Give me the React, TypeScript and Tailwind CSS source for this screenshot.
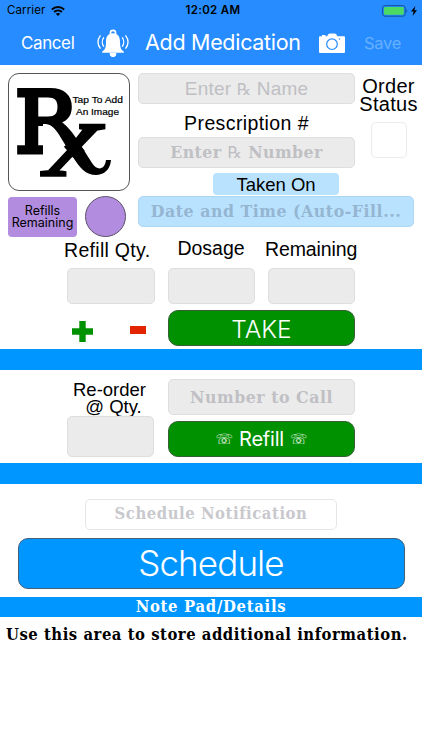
import { ReactNode } from "react";
import clsx from "clsx";

interface FieldProps {
  placeholder?: ReactNode;
  className?: string;
}

function Field({ placeholder, className }: FieldProps) {
  return (
    <div
      className={clsx(
        "flex items-center justify-center rounded-[5px] border whitespace-nowrap",
        className
      )}
    >
      {placeholder}
    </div>
  );
}

function Divider() {
  return <div className="h-[21px] shrink-0 bg-[#0096ff]" />;
}

function StatusBar() {
  return (
    <div className="grid h-[22px] grid-cols-3 items-center pl-[7px] pr-[5px] text-black">
      <div className="flex items-center gap-[6px] text-[11.5px] tracking-[0.1px]">
        Carrier
        <svg width="14" height="10" viewBox="0 0 14 10" fill="none" stroke="black" strokeWidth="2">
          <path d="M0.8 3.6C4.3.2 9.7.2 13.2 3.6" />
          <path d="M3.1 6C5.3 3.9 8.7 3.9 10.9 6" />
          <path d="M7 10L4.8 7.8C6 6.7 8 6.7 9.2 7.8Z" fill="black" stroke="none" />
        </svg>
      </div>
      <div className="pl-[2px] text-center text-[11.5px] font-semibold tracking-[0.35px]">12:02 AM</div>
      <div className="flex items-center justify-end gap-[3px]">
        <svg width="26" height="12" viewBox="0 0 26 12">
          <rect x="0.6" y="0.6" width="22.6" height="10.6" rx="2.4" fill="none" stroke="#14539c" />
          <rect x="2" y="2" width="19.8" height="7.8" rx="1" fill="#4cd964" />
          <path d="M24.4 4.2C25.6 4.7 25.6 7.1 24.4 7.6Z" fill="#14539c" />
        </svg>
        <svg width="6" height="10" viewBox="0 0 6 10">
          <path d="M4.3 0L0 5.6H2.6L1.6 10L6 4.2H3.4Z" />
        </svg>
      </div>
    </div>
  );
}

function BellIcon() {
  return (
    <svg className="ml-[22px] shrink-0" width="32" height="29" viewBox="0 0 32 29" fill="none" stroke="white">
      <circle cx="16" cy="4" r="2.6" strokeWidth="1.6" />
      <path
        d="M16 4.2C10.8 4.2 9 8 9 12.5C9 18.5 8.2 20.8 5.2 22.4V23.8H26.8V22.4C23.8 20.8 23 18.5 23 12.5C23 8 21.2 4.2 16 4.2Z"
        fill="white"
        stroke="none"
      />
      <path d="M13 24.5A3 3.2 0 0 0 19 24.5Z" fill="white" />
      <path d="M6.8 8.3C4.8 11 4.8 15 6.8 17.7M3.5 6.3C.3 10.5.3 15.5 3.5 19.7" strokeWidth="1.3" />
      <path d="M25.2 8.3C27.2 11 27.2 15 25.2 17.7M28.5 6.3C31.7 10.5 31.7 15.5 28.5 19.7" strokeWidth="1.3" />
    </svg>
  );
}

function CameraIcon() {
  return (
    <svg className="ml-[17px] shrink-0" width="26" height="21" viewBox="0 0 26 21">
      <path
        d="M1 3.2H3V2H6.5V3.2H8L9.3 1.2Q9.9.4 11 .4H15.5Q16.6.4 17.2 1.2L18.5 3.2H25Q26 3.2 26 4.2V19Q26 20 25 20H1Q0 20 0 19V4.2Q0 3.2 1 3.2Z"
        fill="white"
      />
      <circle cx="13" cy="11.2" r="5.3" fill="white" stroke="#268cff" strokeWidth="1.2" />
      <circle cx="20.5" cy="6" r="0.7" fill="#268cff" />
    </svg>
  );
}

function NavBar() {
  return (
    <div className="flex h-[43px] items-center pl-[21px] text-white">
      <span className="w-[54px] text-[17px] tracking-[-0.4px]">Cancel</span>
      <BellIcon />
      <span className="ml-[16px] w-[157px] whitespace-nowrap pb-[2px] text-[21.5px] tracking-[-0.3px]">Add Medication</span>
      <CameraIcon />
      <span className="ml-[19px] text-[16.5px] tracking-[-0.3px] text-[#68b0ff]">Save</span>
    </div>
  );
}

// Rx mark with the tap hint over its upper right corner
function ImagePicker() {
  return (
    <div className="h-[118px] w-[122px] rounded-[11px] border border-[#555]">
      <svg width="120" height="116" viewBox="9 75 120 116">
        <clipPath id="r-top">
          <path d="M9 75H90V125H43V165H9Z" />
        </clipPath>
        <clipPath id="x-bottom">
          <path d="M79 118H120V138L80 154L71 160V185H36V165L68 145L79 140Z" />
        </clipPath>
        <g stroke="black">
          <g clipPath="url(#r-top)" fontFamily="DejaVu Serif">
            <text x="15" y="153" fontSize="84" strokeWidth="5">R</text>
          </g>
          <g clipPath="url(#x-bottom)" fontFamily="Liberation Serif">
            <text x="41" y="175.5" fontSize="109" strokeWidth="3.5" textLength="67" lengthAdjust="spacingAndGlyphs">x</text>
          </g>
        </g>
        {/* shared leg that runs out into the tail */}
        <path d="M56 120C66 124 73 134 80 145L92 164C98 173 105 170 106 161H111C110 177 93 180 83 171C76 164 69 152 61 139C56 130 52 126 46 125Z" />
        {/* hairline bridging the leg and the upper arm */}
        <path d="M88 128L70 151" stroke="black" strokeWidth="5.5" />
        <g fontFamily="Liberation Sans" fontSize="9.6" stroke="black" strokeWidth="0.2">
          <text x="72.500" y="104" textLength="50.500" lengthAdjust="spacingAndGlyphs">Tap To Add</text>
          <text x="76" y="116" textLength="43" lengthAdjust="spacingAndGlyphs">An Image</text>
        </g>
      </svg>
    </div>
  );
}

function RxSign({ className }: { className?: string }) {
  return <span className={clsx("font-['DejaVu_Sans'] font-normal", className)}>℞</span>;
}

const grayField = "border-[#dedede] bg-[#ebebeb] text-[#bfbfc4]";
const serif = "font-['DejaVu_Serif_Condensed','DejaVu_Serif',serif] font-bold";

export default function App() {
  return (
    <div className="flex h-[750px] w-[422px] flex-col overflow-hidden bg-white font-['Inter',sans-serif] text-black">
      <header className="h-[65px] shrink-0 bg-[#268cff]">
        <StatusBar />
        <NavBar />
      </header>

      <section className="flex h-[173px] shrink-0 pl-[8px] pt-[8px]">
        <div className="w-[130px] shrink-0">
          <ImagePicker />
          <div className="mt-[5px] flex items-center gap-[8px]">
            <div className="flex h-[40px] w-[69px] flex-col items-center justify-center rounded-[4px] bg-[#b18cdf] text-[12.5px] leading-[12px]">
              <span>Refills</span>
              <span>Remaining</span>
            </div>
            <div className="size-[41px] rounded-full border border-[#5d5268] bg-[#b18cdf]" />
          </div>
        </div>
        <div className="flex w-[284px] flex-col">
          <div className="flex">
            <div className="flex w-[217px] flex-col items-center">
              <Field
                className={clsx(grayField, "h-[31px] w-full pt-[2px] font-['Liberation_Sans'] text-[19px] tracking-[0.2px]")}
                placeholder={<span>Enter <RxSign className="text-[16px]" /> Name</span>}
              />
              <div className="h-[33px] whitespace-nowrap font-['Liberation_Sans'] text-[19.5px] leading-[39px] tracking-[0.4px]">Prescription #</div>
              <Field
                className={clsx(grayField, serif, "h-[31px] w-full text-[17.5px] tracking-[0.45px]")}
                placeholder={<span>Enter <RxSign className="text-[16px]" /> Number</span>}
              />
              <div className="ml-[75px] mt-[5px] h-[22px] w-[126px] self-start rounded-[4px] bg-[#b9e2ff] text-center font-['Liberation_Sans'] text-[18.5px] leading-[23px]">
                Taken On
              </div>
            </div>
            <div className="flex w-[67px] flex-col items-center pt-[4px]">
              <div className="text-center font-['Liberation_Sans'] text-[20px] leading-[18px] tracking-[0.3px]">
                Order
                <br />
                Status
              </div>
              <div className="mt-[9px] size-[36px] rounded-[5px] border border-[#ebebeb]" />
            </div>
          </div>
          <Field
            className={clsx(serif, "mt-[1px] h-[31px] w-[276px] border-[#aed6f2] bg-[#b9e2ff] text-[17.5px] tracking-[0.55px] text-[#95b5d1]")}
            placeholder="Date and Time (Auto-Fill..."
          />
        </div>
      </section>

      <section className="h-[111px] shrink-0 pl-[67px]">
        <div className="grid h-[30px] grid-cols-[83px_95px_90px] gap-x-[10px] whitespace-nowrap text-center font-['Liberation_Sans'] text-[19.5px] leading-[24px]">
          <span className="-ml-[3px] tracking-[0.3px]">Refill Qty.</span>
          <span className="pl-[7px] leading-[20px]">Dosage</span>
          <span className="leading-[22px] tracking-[-0.1px]">Remaining</span>
        </div>
        <div className="flex gap-[13px]">
          <Field className={clsx(grayField, "h-[36px] w-[87.5px]")} />
          <Field className={clsx(grayField, "h-[36px] w-[87px]")} />
          <Field className={clsx(grayField, "h-[36px] w-[87.5px]")} />
        </div>
        <div className="mt-[6px] flex">
          <div className="flex w-[101px] pl-[5px]">
            <svg className="mt-[11px]" width="21" height="21">
              <path d="M7.3 0H13.7V7.3H21V13.7H13.7V21H7.3V13.7H0V7.3H7.3Z" fill="#009100" />
            </svg>
            <svg className="ml-[37px] mt-[16px]" width="16" height="8">
              <rect width="16" height="8" fill="#e32400" />
            </svg>
          </div>
          <button className="h-[36px] w-[187px] rounded-[10px] border border-[#355f35] bg-[#009100] text-[24.5px] font-light text-white">TAKE</button>
        </div>
      </section>

      <Divider />

      <section className="flex h-[93px] shrink-0 pl-[67px]">
        <div className="w-[101px] pt-[10px]">
          <div className="h-[36px] w-[87px] pt-px text-center font-['Liberation_Sans'] text-[18.5px] leading-[17px]">
            <div className="-ml-[2px]">Re-order</div>
            <div className="pl-[6px]">@ Qty.</div>
          </div>
          <Field className={clsx(grayField, "relative h-[41px] w-[87px]")} />
        </div>
        <div className="w-[187px] pt-[9px]">
          <Field
            className={clsx(grayField, serif, "h-[36px] text-[17.5px] tracking-[0.55px]")}
            placeholder="Number to Call"
          />
          <button className="mt-[6px] flex h-[36px] w-full items-center justify-center gap-[6px] rounded-[10px] border border-[#355f35] bg-[#009100] text-[20px] text-white">
            <span className="font-['DejaVu_Sans'] text-[14px]">☏</span>
            <span className="tracking-[-0.2px]">Refill</span>
            <span className="font-['DejaVu_Sans'] text-[14px]">☏</span>
          </button>
        </div>
      </section>

      <Divider />

      <section className="flex h-[113px] shrink-0 flex-col pt-[15px]">
        <Field
          className={clsx(serif, "ml-[85px] h-[31px] w-[252px] border-[#e6e6e6] text-[16.5px] tracking-[0.55px] text-[#c8c8cd]")}
          placeholder="Schedule Notification"
        />
        <button className="ml-[17.5px] mt-[8px] h-[51px] w-[387px] rounded-[10px] border border-[#45617a] bg-[#0096ff] text-[35px] font-light leading-none tracking-[-0.9px] text-white">
          Schedule
        </button>
      </section>

      <section>
        <div className={clsx(serif, "h-[20px] bg-[#0096ff] text-center text-[16.5px] leading-[20px] tracking-[0.7px] text-white")}>
          Note Pad/Details
        </div>
        <p className={clsx(serif, "whitespace-nowrap pl-[6px] pt-[8px] text-[16.5px] leading-[20px] tracking-[0.52px]")}>
          Use this area to store additional information.
        </p>
      </section>
    </div>
  );
}
